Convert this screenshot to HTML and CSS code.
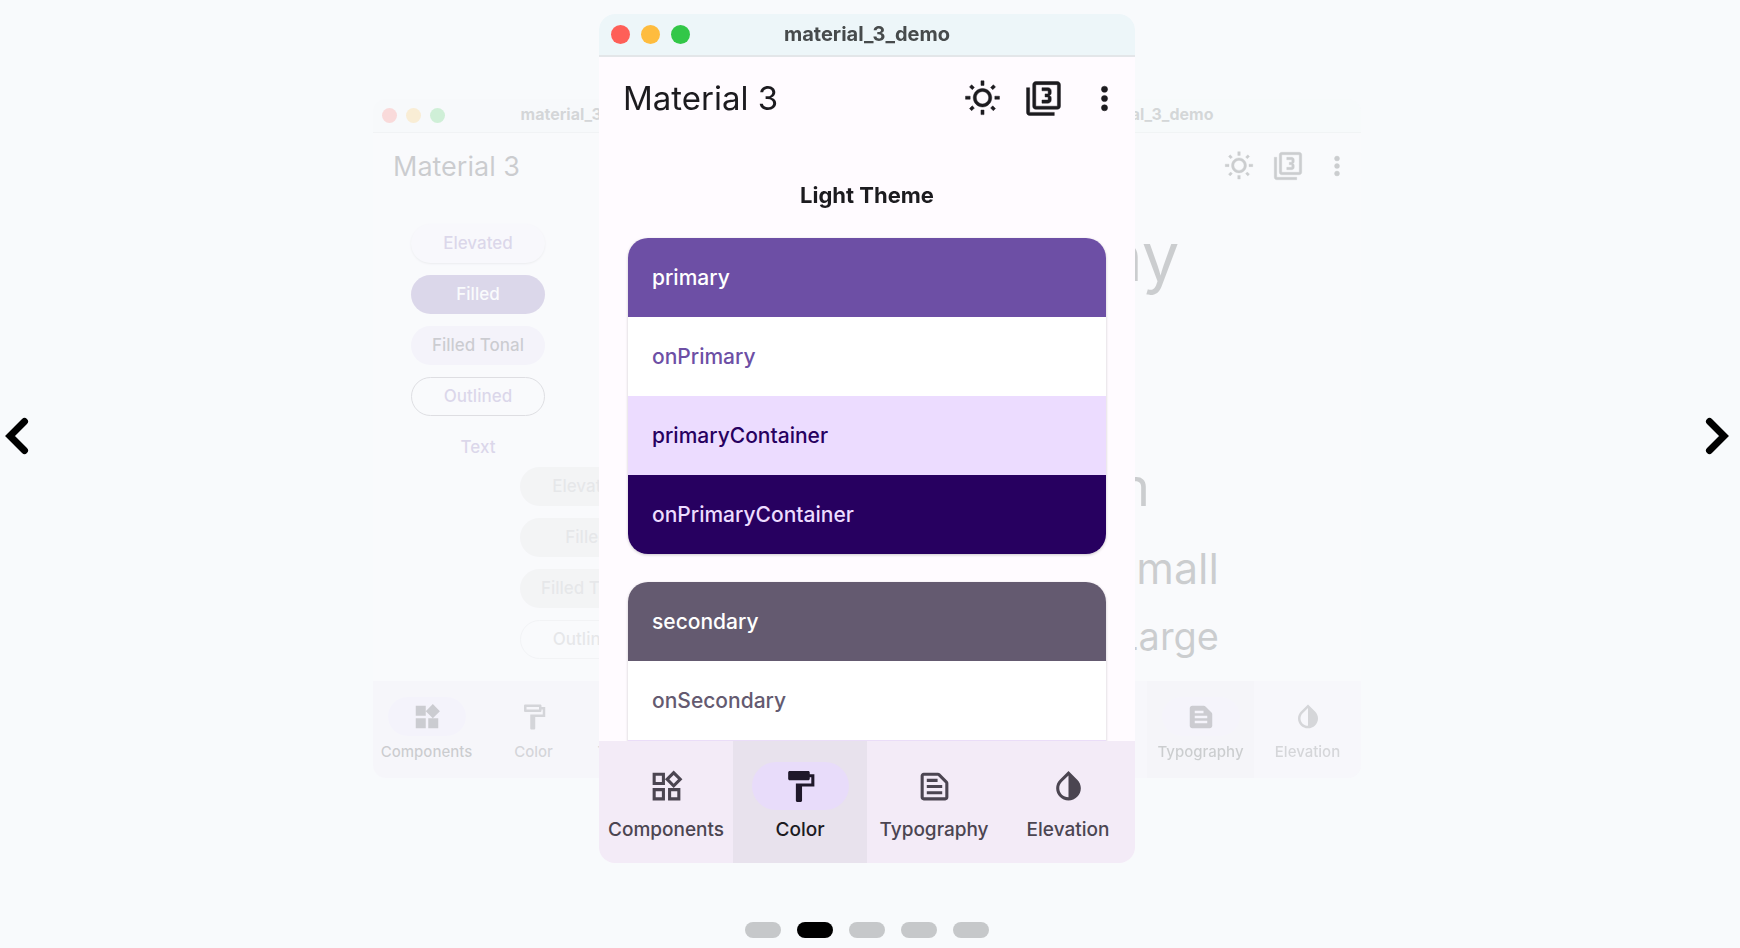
FILE: index.html
```html
<!DOCTYPE html>
<html lang="en">
<head>
<meta charset="utf-8">
<title>Material 3 demo</title>
<link rel="stylesheet" href="styles.css">
</head>
<body>
<svg width="0" height="0" class="sprite" aria-hidden="true">
  <symbol id="sun" viewBox="0 0 24 24"><path d="M6.76 4.84l-1.8-1.79-1.41 1.41 1.79 1.79 1.42-1.41zM4 10.5H1v2h3v-2zm9-9.95h-2V3.5h2V.55zm7.45 3.91l-1.41-1.41-1.79 1.79 1.41 1.41 1.79-1.79zm-3.21 13.7l1.79 1.8 1.41-1.41-1.8-1.79-1.4 1.4zM20 10.5v2h3v-2h-3zm-8-5c-3.31 0-6 2.69-6 6s2.69 6 6 6 6-2.69 6-6-2.69-6-6-6zm0 10c-2.21 0-4-1.79-4-4s1.79-4 4-4 4 1.79 4 4-1.79 4-4 4zm-1 6.95h2V19.5h-2v2.95zm-7.45-3.91l1.41 1.41 1.79-1.8-1.41-1.41-1.79 1.8z"/></symbol>
  <symbol id="three" viewBox="0 0 24 24"><path d="M21 1H7c-1.1 0-2 .9-2 2v14c0 1.1.9 2 2 2h14c1.1 0 2-.9 2-2V3c0-1.1-.9-2-2-2zm0 16H7V3h14v14zM3 5H1v16c0 1.1.9 2 2 2h16v-2H3V5zm14 8v-1.5c0-.83-.67-1.5-1.5-1.5.83 0 1.5-.67 1.5-1.5V7c0-1.11-.9-2-2-2h-4v2h4v2h-2v2h2v2h-4v2h4c1.1 0 2-.89 2-2z"/></symbol>
  <symbol id="more" viewBox="0 0 24 24"><circle cx="12" cy="6" r="2"/><circle cx="12" cy="12" r="2"/><circle cx="12" cy="18" r="2"/></symbol>
  <symbol id="widgets" viewBox="0 0 24 24"><path d="M16.66 4.52l2.83 2.83-2.83 2.83-2.83-2.83 2.83-2.83M9 5v4H5V5h4m10 10v4h-4v-4h4M9 15v4H5v-4h4m7.66-13.31L11 7.34 16.66 13l5.66-5.66-5.66-5.65zM11 3H3v8h8V3zm10 10h-8v8h8v-8zm-10 0H3v8h8v-8z"/></symbol>
  <symbol id="widgets-filled" viewBox="0 0 24 24"><path d="M13 13v8h8v-8h-8zM3 21h8v-8H3v8zM3 3v8h8V3H3zm13.66-1.31L11 7.34 16.66 13l5.66-5.66-5.66-5.65z"/></symbol>
  <symbol id="paint" viewBox="0 0 24 24"><path d="M18 4V3c0-.55-.45-1-1-1H5c-.55 0-1 .45-1 1v4c0 .55.45 1 1 1h12c.55 0 1-.45 1-1V6h1v4H9v11c0 .55.45 1 1 1h2c.55 0 1-.45 1-1v-9h8V4h-3zm-2 2H6V4h10v2z"/></symbol>
  <symbol id="paint-filled" viewBox="0 0 24 24"><path d="M18 4V3c0-.55-.45-1-1-1H5c-.55 0-1 .45-1 1v4c0 .55.45 1 1 1h12c.55 0 1-.45 1-1V6h1v4H9v11c0 .55.45 1 1 1h2c.55 0 1-.45 1-1v-9h8V4h-3z"/></symbol>
  <symbol id="snippet" viewBox="0 0 24 24"><path d="M14.17 5L19 9.83V19H5V5h9.17m0-2H5c-1.1 0-2 .9-2 2v14c0 1.1.9 2 2 2h14c1.1 0 2-.9 2-2V9.83c0-.53-.21-1.04-.59-1.41l-4.83-4.83c-.37-.38-.88-.59-1.41-.59zM7 15h10v2H7v-2zm0-4h10v2H7v-2zm0-4h7v2H7V7z"/></symbol>
  <symbol id="snippet-filled" viewBox="0 0 24 24"><path d="M20.41 8.41l-4.83-4.83c-.37-.37-.88-.58-1.41-.58H5c-1.1 0-2 .9-2 2v14c0 1.1.9 2 2 2h14c1.1 0 2-.9 2-2V9.83c0-.53-.21-1.04-.59-1.42zM7 7h7v2H7V7zm10 10H7v-2h10v2zm0-4H7v-2h10v2z"/></symbol>
  <symbol id="drop" viewBox="0 0 24 24"><path d="M12 4.81V19c-3.31 0-6-2.63-6-5.87 0-1.56.62-3.03 1.75-4.14L12 4.81M6.35 7.56C4.9 8.99 4 10.96 4 13.13 4 17.48 7.58 21 12 21s8-3.52 8-7.87c0-2.17-.9-4.14-2.35-5.57L12 2 6.35 7.56z"/></symbol>
</svg>

<main class="carousel">
  <div class="row">
    <button class="arrow" aria-label="Previous"><svg width="24" height="38" viewBox="0 0 24 38"><path d="M19.500 4.500L5 19l14.500 14.500"/></svg></button>

    <div class="stage">
      <section class="window side">
        <header class="titlebar"><div class="lights"><i class="red"></i><i class="amber"></i><i class="green"></i></div><span>material_3_demo</span></header>
        <div class="appbar"><h2>Material 3</h2></div>
        <div class="content components">
          <div class="stack">
            <button class="btn elevated">Elevated</button>
            <button class="btn filled">Filled</button>
            <button class="btn tonal">Filled Tonal</button>
            <button class="btn outlined">Outlined</button>
            <button class="btn">Text</button>
          </div>
          <div class="stack disabled">
            <button class="btn" disabled>Elevated</button>
            <button class="btn" disabled>Filled</button>
            <button class="btn" disabled>Filled Tonal</button>
            <button class="btn outlined" disabled>Outlined</button>
          </div>
        </div>
        <nav class="navbar">
          <button class="tab selected"><span class="pill"><svg><use href="#widgets-filled"/></svg></span>Components</button>
          <button class="tab"><span class="pill"><svg><use href="#paint"/></svg></span>Color</button>
          <button class="tab"><span class="pill"><svg><use href="#snippet"/></svg></span>Typography</button>
        </nav>
      </section>

      <section class="window front">
        <header class="titlebar"><div class="lights"><i class="red"></i><i class="amber"></i><i class="green"></i></div><span>material_3_demo</span></header>
        <div class="appbar">
          <h2>Material 3</h2>
          <button class="action" aria-label="Toggle brightness"><svg><use href="#sun"/></svg></button>
          <button class="action" aria-label="Switch Material version"><svg><use href="#three"/></svg></button>
          <button class="action" aria-label="More"><svg><use href="#more"/></svg></button>
        </div>
        <div class="content colors">
          <h3>Light Theme</h3>
          <div class="swatches">
            <p class="primary">primary</p>
            <p class="on-primary">onPrimary</p>
            <p class="primary-container">primaryContainer</p>
            <p class="on-primary-container">onPrimaryContainer</p>
          </div>
          <div class="swatches">
            <p class="secondary">secondary</p>
            <p class="on-secondary">onSecondary</p>
            <p class="secondary-container"></p>
          </div>
        </div>
        <nav class="navbar">
          <button class="tab"><span class="pill"><svg><use href="#widgets"/></svg></span>Components</button>
          <button class="tab selected hover"><span class="pill"><svg><use href="#paint-filled"/></svg></span>Color</button>
          <button class="tab"><span class="pill"><svg><use href="#snippet"/></svg></span>Typography</button>
          <button class="tab"><span class="pill"><svg><use href="#drop"/></svg></span>Elevation</button>
        </nav>
      </section>

      <section class="window side">
        <header class="titlebar"><span>material_3_demo</span></header>
        <div class="appbar end">
          <button class="action" aria-label="Toggle brightness"><svg><use href="#sun"/></svg></button>
          <button class="action" aria-label="Switch Material version"><svg><use href="#three"/></svg></button>
          <button class="action" aria-label="More"><svg><use href="#more"/></svg></button>
        </div>
        <div class="content type">
          <p class="display-large">Display Large</p>
          <p class="display-medium">Display Medium</p>
          <p class="display-small">Display Small</p>
          <p class="headline-large">Headline Large</p>
        </div>
        <nav class="navbar end">
          <button class="tab selected hover"><span class="pill"><svg><use href="#snippet-filled"/></svg></span>Typography</button>
          <button class="tab"><span class="pill"><svg><use href="#drop"/></svg></span>Elevation</button>
        </nav>
      </section>
    </div>

    <button class="arrow" aria-label="Next"><svg width="24" height="38" viewBox="0 0 24 38"><path d="M4.500 4.500L19 19L4.500 33.500"/></svg></button>
  </div>

  <div class="dots">
    <button aria-label="Slide 1"></button>
    <button aria-label="Slide 2" class="current"></button>
    <button aria-label="Slide 3"></button>
    <button aria-label="Slide 4"></button>
    <button aria-label="Slide 5"></button>
  </div>
</main>
</body>
</html>
```

FILE: styles.css
```css
* { box-sizing: border-box; margin: 0; }

body {
  background: #f8fafc;
  font-family: Inter, "Liberation Sans", sans-serif;
  color: #1c1b1f;
}

button { border: 0; padding: 0; background: none; font: inherit; color: inherit; }
svg { display: block; fill: currentColor; }
.sprite { position: absolute; }

.carousel {
  display: flex;
  flex-direction: column;
  height: 100vh;
  padding: 14px 6px 10px 0;
}

.row { display: flex; flex: 1; min-height: 0; align-items: center; justify-content: space-between; padding: 0 5px; }
.arrow { padding-bottom: 6px; }
.arrow path { fill: none; stroke: #000; stroke-width: 7; stroke-linecap: round; }

.stage { display: flex; height: 100%; align-items: center; }

.window {
  --bar: 43px;
  --light: 19px;
  --light-gap: 11px;
  --title: 20px;
  --appbar: 82px;
  --heading: 33px;
  --inset: 24px;
  --action: 61px;
  --icon: 37px;
  --nav: 122px;
  --nav-top: 21px;
  --pill-w: 97px;
  --pill-h: 48px;
  --pill-gap: 8px;
  --label: 19px;
  display: flex;
  flex-direction: column;
  width: 536px;
  height: 100%;
  border-radius: 16px;
  background: #fffbff;
  overflow: hidden;
}

.window.front { position: relative; z-index: 1; margin: 0 -202px; }

.window.side {
  --bar: 34px;
  --light: 15px;
  --light-gap: 9px;
  --title: 16px;
  --appbar: 67px;
  --heading: 27px;
  --inset: 20px;
  --action: 49px;
  --icon: 30px;
  --nav: 97px;
  --nav-top: 16px;
  --pill-w: 78px;
  --pill-h: 39px;
  --pill-gap: 6px;
  --label: 15px;
  width: 428px;
  height: 80%;
  border-radius: 13px;
  opacity: 0.2;
}

.titlebar {
  display: grid;
  grid-template-columns: 1fr auto 1fr;
  align-items: center;
  flex: none;
  height: var(--bar);
  padding: 0 12px;
  border-bottom: 2px solid #e3e6e9;
  background: #edf6f9;
  color: #474b4c;
  font-size: var(--title);
  font-weight: 700;
}
.side .titlebar { padding: 0 9px; border-bottom: 1px solid #d6d9dc; background: #f4f8fa; }
.titlebar span { grid-column: 2; line-height: 1; padding-bottom: 2px; }
.lights { display: flex; gap: var(--light-gap); }
.lights i { width: var(--light); height: var(--light); border-radius: 50%; }
.red { background: #fe5f58; }
.amber { background: #febc3e; }
.green { background: #32c748; }

.appbar { display: flex; align-items: center; flex: none; height: var(--appbar); padding-left: var(--inset); }
.appbar.end { justify-content: flex-end; }
.appbar h2 { flex: 1; font-size: var(--heading); font-weight: 400; }
.action { display: grid; place-items: center; width: var(--action); height: var(--action); }
.action svg, .pill svg { width: var(--icon); height: var(--icon); }
.action svg { stroke: currentColor; stroke-width: 0.3; }

.content { flex: 1; min-height: 0; overflow: hidden; }

.colors { display: flex; flex-direction: column; gap: 28px; padding: 41px 29px 0; }
.colors h3 { font-size: 22px; line-height: 30px; font-weight: 700; text-align: center; }
.swatches { flex: none; border-radius: 20px; overflow: hidden; box-shadow: 0 1px 3px #00000033; }
.swatches p { height: 79px; padding: 0 24px; font-size: 21px; line-height: 79px; font-weight: 500; }
.primary { background: #6d4fa5; color: #fff; }
.on-primary { background: #fff; color: #6d4fa5; }
.primary-container { background: #ecdcff; color: #270060; }
.on-primary-container { background: #270060; color: #ecdcff; }
.secondary { background: #645a70; color: #fff; }
.on-secondary { background: #fff; color: #645a70; }
.secondary-container { background: #eaddf8; }

.components { padding: 24px 38px 0; }
.stack { display: flex; flex-direction: column; gap: 12px; width: 134px; }
.stack.disabled { margin: 0 auto; }
.btn { height: 39px; border-radius: 20px; font-size: 17px; font-weight: 500; color: #6d4fa5; }
.elevated { background: #f9f4fd; box-shadow: 0 1px 2px #00000040; }
.filled { background: #6d4fa5; color: #fff; }
.tonal { background: #e5daf5; color: #1f182a; }
.outlined { border: 1px solid #7a757f; }
.disabled .btn { background: #e2dede; color: #a09ea2; }
.disabled .outlined { background: none; border-color: #dcdadd; }

.type { padding: 18px 15px 0; color: #1c1b1f; }
.display-large { font-size: 67px; line-height: 78px; }
.display-medium { font-size: 53px; line-height: 64px; padding: 17px 0; }
.display-small { font-size: 43px; line-height: 54px; padding: 5px 0 16px; }
.headline-large { font-size: 38px; line-height: 50px; white-space: nowrap; }

.navbar { display: flex; flex: none; height: var(--nav); background: #f3ebf7; }
.navbar.end { justify-content: flex-end; }
.tab {
  display: flex;
  flex-direction: column;
  align-items: center;
  flex: 0 0 25%;
  gap: var(--pill-gap);
  padding-top: var(--nav-top);
  color: #4b4551;
  font-size: var(--label);
  font-weight: 500;
}
.tab.hover { background: #e8e2ed; }
.tab.selected { color: #1c1b1f; }
.pill { display: grid; place-items: center; width: var(--pill-w); height: var(--pill-h); border-radius: 24px; }
.selected .pill { background: #e8dcfa; color: #1f182a; }

.dots { display: flex; justify-content: center; gap: 16px; margin-top: 59px; }
.dots button { width: 36px; height: 16px; border-radius: 8px; background: #c6c8ca; }
.dots .current { background: #000; }
```
